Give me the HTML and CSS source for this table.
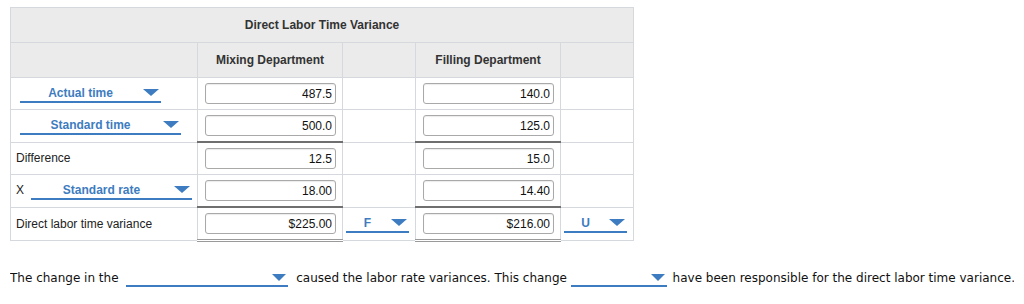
FILE: index.html
```
<!DOCTYPE html>
<html lang="en">
<head>
  <meta charset="UTF-8" />
  <title>Direct Labor Time Variance</title>
  <link rel="stylesheet" href="styles.css">
</head>
<body>

  <table class="variance">
    <colgroup>
      <col class="c-label">
      <col class="c-dept">
      <col class="c-fu">
      <col class="c-dept">
      <col class="c-fu">
    </colgroup>
    <tr class="title-row">
      <th colspan="5">Direct Labor Time Variance</th>
    </tr>
    <tr class="head-row">
      <th></th>
      <th>Mixing Department</th>
      <th></th>
      <th>Filling Department</th>
      <th></th>
    </tr>
    <tr>
      <td><span class="pick w-actual"><span class="pick-text">Actual time</span><span class="caret"></span></span></td>
      <td class="num"><input type="text" value="487.5"></td>
      <td></td>
      <td class="num"><input type="text" value="140.0"></td>
      <td></td>
    </tr>
    <tr>
      <td><span class="pick w-std"><span class="pick-text">Standard time</span><span class="caret"></span></span></td>
      <td class="num"><input type="text" value="500.0"></td>
      <td></td>
      <td class="num"><input type="text" value="125.0"></td>
      <td></td>
    </tr>
    <tr class="sum-row">
      <td>Difference</td>
      <td class="num"><input type="text" value="12.5"></td>
      <td></td>
      <td class="num"><input type="text" value="15.0"></td>
      <td></td>
    </tr>
    <tr>
      <td><span class="times">X</span><span class="pick w-rate"><span class="pick-text">Standard rate</span><span class="caret"></span></span></td>
      <td class="num"><input type="text" value="18.00"></td>
      <td></td>
      <td class="num"><input type="text" value="14.40"></td>
      <td></td>
    </tr>
    <tr class="sum-row total-row">
      <td>Direct labor time variance</td>
      <td class="num"><input type="text" value="$225.00"></td>
      <td><span class="pick w-fu"><span class="pick-text">F</span><span class="caret"></span></span></td>
      <td class="num"><input type="text" value="$216.00"></td>
      <td><span class="pick w-fu"><span class="pick-text">U</span><span class="caret"></span></span></td>
    </tr>
  </table>

  <p class="sentence">The change in the <span class="pick blank w-blank1"><span class="pick-text"></span><span class="caret"></span></span> caused the labor rate variances. This change <span class="pick blank w-blank2"><span class="pick-text"></span><span class="caret"></span></span> have been responsible for the direct labor time variance.</p>

</body>
</html>
```

FILE: styles.css
```
body {
  margin: 7px 10px;
  font-family: 'Liberation Sans', Arial, sans-serif;
  font-size: 12px;
  color: #222;
  background: #fff;
}

.variance {
  border-collapse: collapse;
  table-layout: fixed;
  width: 623px;
}

.c-label { width: 187px; }
.c-dept  { width: 145px; }
.c-fu    { width: 73px; }

.variance th,
.variance td {
  border: 1px solid #d5d9dd;
  padding: 0 5px;
}

.variance th {
  background-color: #ebebeb;
  font-weight: bold;
  color: #333;
  height: 34px;
  text-align: center;
}

.variance td {
  height: 31px;
}

.variance td.num {
  padding: 0 6px 0 7px;
}

/* heavy rule above subtotal rows, only under the number columns */
.sum-row td.num {
  border-top: 2px solid #6f6f6f;
}

.total-row td.num {
  border-bottom: 3px double #9a9a9a;
}

input {
  box-sizing: border-box;
  width: 100%;
  height: 21px;
  padding: 0 3px;
  border: 1px solid #a9a9a9;
  border-radius: 3px;
  box-shadow: inset 0 1px 1px rgba(0, 0, 0, 0.08);
  font-family: 'Liberation Sans', Arial, sans-serif;
  font-size: 12px;
  color: #111;
  text-align: right;
  display: block;
}

.times {
  display: inline-block;
  width: 15px;
}

/* blue underline dropdowns */
.pick {
  display: inline-flex;
  align-items: center;
  vertical-align: middle;
  box-sizing: border-box;
  height: 18px;
  border-bottom: 2px solid #3d7cc0;
  color: #3d7cc0;
  font-weight: bold;
}

.pick-text {
  flex: 1;
  text-align: center;
  padding-right: 2px;
}

.caret {
  width: 0;
  height: 0;
  margin-right: 2px;
  border-left: 8px solid transparent;
  border-right: 8px solid transparent;
  border-top: 7px solid #3d7cc0;
}

.variance td .pick { margin-left: 4px; }
.variance td .times + .pick { margin-left: 0; }

.w-actual { width: 141px; }
.w-std    { width: 161px; }
.w-rate   { width: 161px; }
.variance td .w-fu { width: 63px; margin-left: -2px; }

.sentence {
  margin: 27px 0 0;
  white-space: nowrap;
  font-family: 'DejaVu Sans', Verdana, sans-serif;
  font-size: 12px;
  color: #111;
}

.blank .caret {
  border-left-width: 7px;
  border-right-width: 7px;
}

.w-blank1 { width: 162px; margin: 0 4px; }
.w-blank2 { width: 96px; margin: 0 2px 0 0; }
```
